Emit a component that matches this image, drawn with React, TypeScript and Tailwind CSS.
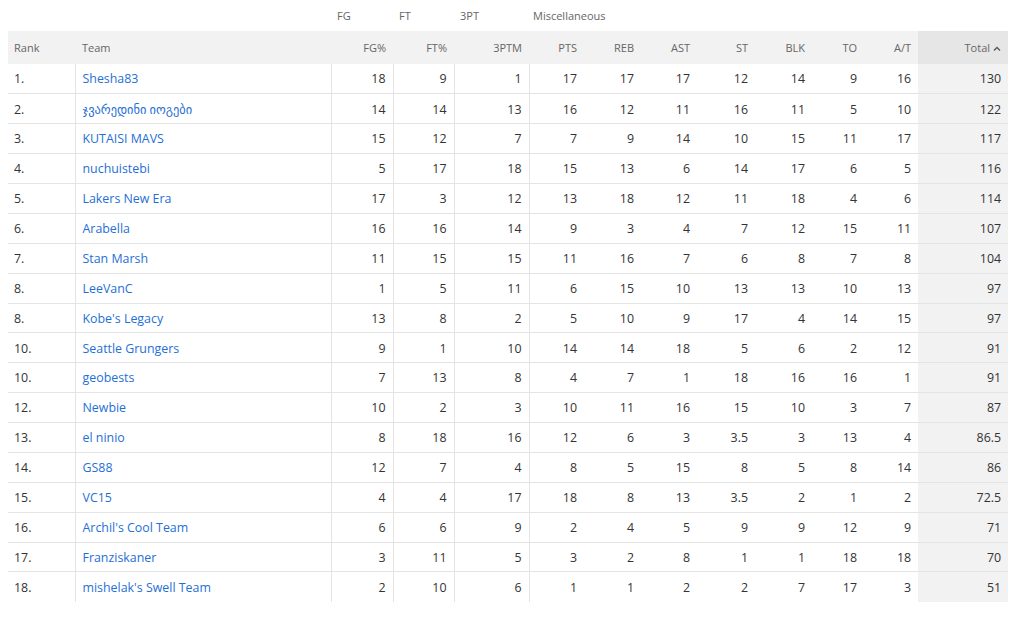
import React from 'react';

type Row = {
  rank: string;
  team: string;
  stats: string[];
  total: string;
};

const rows: Row[] = [
  { rank: '1.', team: 'Shesha83', stats: ['18', '9', '1', '17', '17', '17', '12', '14', '9', '16'], total: '130' },
  { rank: '2.', team: 'ჯვარედინი იოგები', stats: ['14', '14', '13', '16', '12', '11', '16', '11', '5', '10'], total: '122' },
  { rank: '3.', team: 'KUTAISI MAVS', stats: ['15', '12', '7', '7', '9', '14', '10', '15', '11', '17'], total: '117' },
  { rank: '4.', team: 'nuchuistebi', stats: ['5', '17', '18', '15', '13', '6', '14', '17', '6', '5'], total: '116' },
  { rank: '5.', team: 'Lakers New Era', stats: ['17', '3', '12', '13', '18', '12', '11', '18', '4', '6'], total: '114' },
  { rank: '6.', team: 'Arabella', stats: ['16', '16', '14', '9', '3', '4', '7', '12', '15', '11'], total: '107' },
  { rank: '7.', team: 'Stan Marsh', stats: ['11', '15', '15', '11', '16', '7', '6', '8', '7', '8'], total: '104' },
  { rank: '8.', team: 'LeeVanC', stats: ['1', '5', '11', '6', '15', '10', '13', '13', '10', '13'], total: '97' },
  { rank: '8.', team: "Kobe's Legacy", stats: ['13', '8', '2', '5', '10', '9', '17', '4', '14', '15'], total: '97' },
  { rank: '10.', team: 'Seattle Grungers', stats: ['9', '1', '10', '14', '14', '18', '5', '6', '2', '12'], total: '91' },
  { rank: '10.', team: 'geobests', stats: ['7', '13', '8', '4', '7', '1', '18', '16', '16', '1'], total: '91' },
  { rank: '12.', team: 'Newbie', stats: ['10', '2', '3', '10', '11', '16', '15', '10', '3', '7'], total: '87' },
  { rank: '13.', team: 'el ninio', stats: ['8', '18', '16', '12', '6', '3', '3.5', '3', '13', '4'], total: '86.5' },
  { rank: '14.', team: 'GS88', stats: ['12', '7', '4', '8', '5', '15', '8', '5', '8', '14'], total: '86' },
  { rank: '15.', team: 'VC15', stats: ['4', '4', '17', '18', '8', '13', '3.5', '2', '1', '2'], total: '72.5' },
  { rank: '16.', team: "Archil's Cool Team", stats: ['6', '6', '9', '2', '4', '5', '9', '9', '12', '9'], total: '71' },
  { rank: '17.', team: 'Franziskaner', stats: ['3', '11', '5', '3', '2', '8', '1', '1', '18', '18'], total: '70' },
  { rank: '18.', team: "mishelak's Swell Team", stats: ['2', '10', '6', '1', '1', '2', '2', '7', '17', '3'], total: '51' },
];

const statCols = ['FG%', 'FT%', '3PTM', 'PTS', 'REB', 'AST', 'ST', 'BLK', 'TO', 'A/T'];
const statWidths = ['w-[62px]', 'w-[61px]', 'w-[75px]', 'w-[55px]', 'w-[57px]', 'w-[56px]', 'w-[58px]', 'w-[57px]', 'w-[52px]', 'w-[54px]'];
// first three stat columns carry a right divider
const divided = [true, true, true, false, false, false, false, false, false, false];

export default function App() {
  return (
    <div className="h-[620px] w-[1023px] bg-white pl-2 font-['Open_Sans','DejaVu_Sans',sans-serif]">
      <table className="w-[1000px] table-fixed border-collapse">
        <colgroup>
          <col className="w-[67px]" />
          <col className="w-[256px]" />
          {statWidths.map((w, i) => (
            <col key={i} className={w} />
          ))}
          <col className="w-[90px]" />
        </colgroup>
        <thead>
          <tr className="h-[31px] text-[11px] text-[#666]">
            <th colSpan={2} />
            <th className="px-1.5 pt-px text-left font-normal">FG</th>
            <th className="px-1.5 pt-px text-left font-normal">FT</th>
            <th className="px-1.5 pt-px text-left font-normal">3PT</th>
            <th colSpan={7} className="px-1 pt-px text-left font-normal">Miscellaneous</th>
            <th />
          </tr>
          <tr className="h-[33px] bg-[#f2f2f2] text-[11px] text-[#666]">
            <th className="px-1.5 pt-0.5 text-left font-normal">Rank</th>
            <th className="px-[7px] pt-0.5 text-left font-normal">Team</th>
            {statCols.map((c) => (
              <th key={c} className="px-[7px] pt-0.5 text-right font-normal">
                {c}
              </th>
            ))}
            <th className="bg-[#e6e6e6] px-[7px] pt-0.5 text-right font-normal">
              <span className="inline-flex items-center gap-[3px]">
                Total
                <svg width="8" height="6" viewBox="0 0 8 6" fill="none" stroke="#555" strokeWidth="1.3">
                  <path d="M1 4.5 L4 1.5 L7 4.5" />
                </svg>
              </span>
            </th>
          </tr>
        </thead>
        <tbody className="text-[12.4px] text-[#333]">
          {rows.map((r, i) => (
            <tr key={i} className={i < rows.length - 1 ? 'h-[29.88px] border-b border-[#e4e4e4]' : 'h-[29.88px]'}>
              <td className="border-r border-[#e4e4e4] px-1.5 pt-0.5">{r.rank}</td>
              <td className="border-r border-[#e4e4e4] px-[7px] pt-0.5 text-[#1f6fd6]">
                <span className="whitespace-nowrap">{r.team}</span>
              </td>
              {r.stats.map((s, j) => (
                <td key={j} className={divided[j] ? 'border-r border-[#e4e4e4] px-[7px] pt-0.5 text-right' : 'px-[7px] pt-0.5 text-right'}>
                  {s}
                </td>
              ))}
              <td className="bg-[#f2f2f2] px-[7px] pt-0.5 text-right">{r.total}</td>
            </tr>
          ))}
        </tbody>
      </table>
    </div>
  );
}
